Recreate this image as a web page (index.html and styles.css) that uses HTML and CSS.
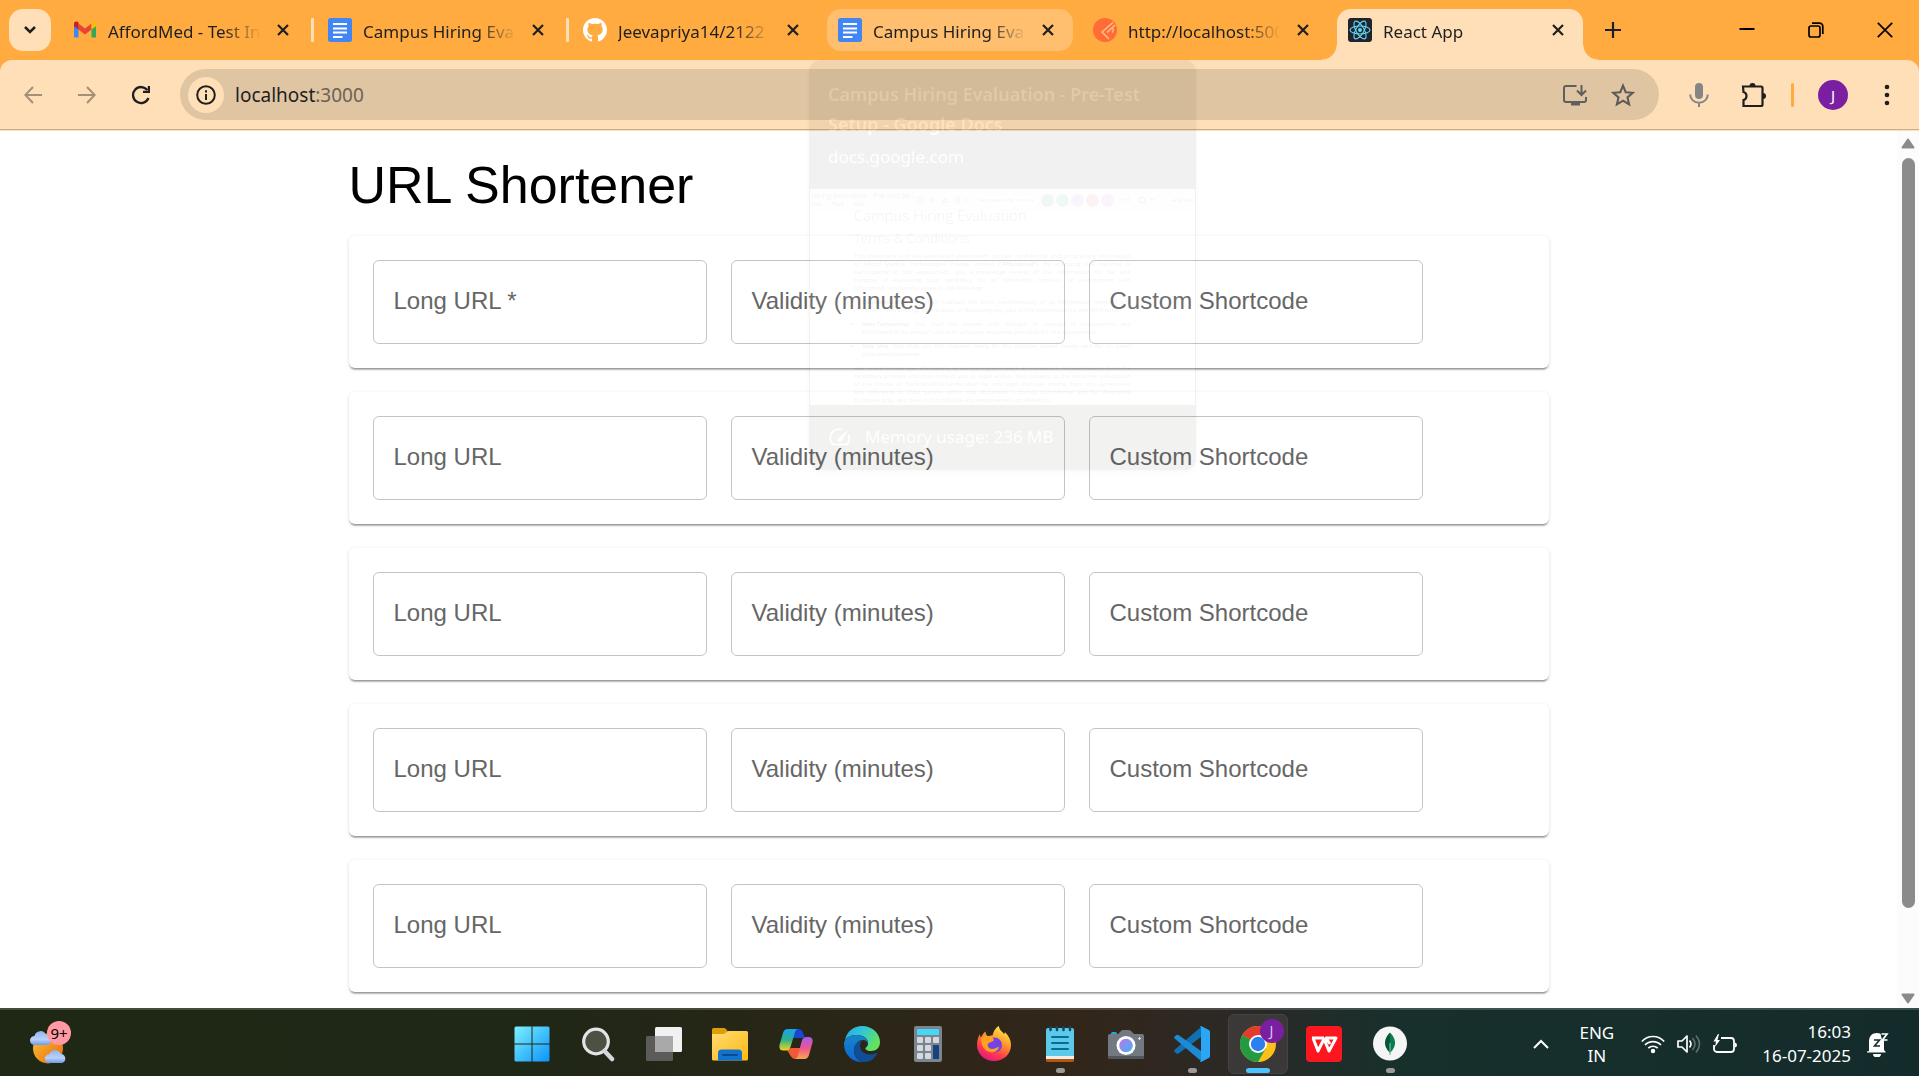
FILE: index.html
```html
<!DOCTYPE html>
<html lang="en">
<head>
<meta charset="utf-8">
<title>React App</title>
<link rel="stylesheet" href="styles.css">
</head>
<body>
<svg class="defs" width="0" height="0" aria-hidden="true">
  <defs>
    <symbol id="close" viewBox="0 0 12 12"><path d="M1 1l10 10M11 1L1 11" fill="none" stroke="#1f1f1f" stroke-width="2.2"/></symbol>
    <symbol id="docs" viewBox="0 0 24 24"><rect width="24" height="24" rx="2.5" fill="#4285f4"/><path d="M5 6h14M5 10.5h14M5 14.5h14M5 19h9.500" fill="none" stroke="#fff" stroke-width="2.2"/></symbol>
  </defs>
</svg>

<header class="browser">
  <div class="tab-strip">
    <button class="tab-search" aria-label="Search tabs"><svg width="14" height="10" viewBox="0 0 14 10"><path d="M2 2l5 5 5-5" fill="none" stroke="#1f1f1f" stroke-width="2.5"/></svg></button>
    <div class="tabs">
      <div class="tab divided">
        <svg class="favicon" viewBox="0 0 24 24"><path d="M1 6v13.500h4.500V10z" fill="#4285f4"/><path d="M23 6v13.500h-4.500V10z" fill="#34a853"/><path d="M5.500 5.500L12 10.500l6.500-5v6L12 16.500l-6.500-5z" fill="#ea4335"/><path d="M1 5.800C1 3.500 3.800 2.800 5.500 4.300v7.200L1 8.200z" fill="#c5221f"/><path d="M23 5.800c0-2.300-2.800-3-4.500-1.500v7.200L23 8.200z" fill="#fbbc04"/></svg>
        <span class="tab-title">AffordMed - Test In</span>
        <button class="tab-close" aria-label="Close tab"><svg width="12" height="12"><use href="#close"/></svg></button>
      </div>
      <div class="tab divided">
        <svg class="favicon"><use href="#docs"/></svg>
        <span class="tab-title">Campus Hiring Eva</span>
        <button class="tab-close" aria-label="Close tab"><svg width="12" height="12"><use href="#close"/></svg></button>
      </div>
      <div class="tab">
        <svg class="favicon" viewBox="0 0 16 16"><path fill="#fff" d="M8 0C3.580 0 0 3.580 0 8c0 3.540 2.290 6.530 5.470 7.590.4.070.550-.170.550-.380 0-.190-.010-.820-.010-1.490-2.010.370-2.530-.490-2.690-.940-.090-.230-.480-.940-.820-1.130-.280-.150-.680-.520-.010-.530.630-.010 1.080.580 1.230.820.720 1.210 1.870.870 2.330.660.070-.520.280-.870.510-1.070-1.780-.2-3.640-.890-3.640-3.950 0-.870.310-1.590.820-2.150-.080-.2-.360-1.020.080-2.120 0 0 .670-.210 2.200.820.640-.180 1.320-.270 2-.270s1.360.090 2 .270c1.530-1.040 2.200-.820 2.200-.820.440 1.100.160 1.920.080 2.120.510.560.820 1.270.820 2.150 0 3.070-1.870 3.750-3.650 3.950.290.250.540.730.540 1.480 0 1.070-.010 1.930-.010 2.200 0 .210.150.460.550.380A8.010 8.010 0 0 0 16 8c0-4.420-3.580-8-8-8z"/></svg>
        <span class="tab-title">Jeevapriya14/2122</span>
        <button class="tab-close" aria-label="Close tab"><svg width="12" height="12"><use href="#close"/></svg></button>
      </div>
      <div class="tab hovered">
        <svg class="favicon"><use href="#docs"/></svg>
        <span class="tab-title">Campus Hiring Eva</span>
        <button class="tab-close" aria-label="Close tab"><svg width="12" height="12"><use href="#close"/></svg></button>
      </div>
      <div class="tab">
        <svg class="favicon" viewBox="0 0 24 24"><circle cx="12" cy="12" r="12" fill="#ff6c37"/><path d="M20 4.500L9 14l7 7M14 14.500l8-7.500" fill="none" stroke="#ffc48a" stroke-width="1.500"/><path d="M19 9.500q2.500 2.500 0 5" fill="none" stroke="#ffc48a" stroke-width="1.300"/></svg>
        <span class="tab-title">http://localhost:500</span>
        <button class="tab-close" aria-label="Close tab"><svg width="12" height="12"><use href="#close"/></svg></button>
      </div>
      <div class="tab active">
        <svg class="favicon" viewBox="0 0 24 24"><rect width="24" height="24" rx="3" fill="#20232a"/><g fill="none" stroke="#61dafb" stroke-width="1.100"><ellipse cx="12" cy="12" rx="10" ry="4"/><ellipse cx="12" cy="12" rx="10" ry="4" transform="rotate(60 12 12)"/><ellipse cx="12" cy="12" rx="10" ry="4" transform="rotate(120 12 12)"/></g><circle cx="12" cy="12" r="2" fill="#61dafb"/></svg>
        <span class="tab-title">React App</span>
        <button class="tab-close" aria-label="Close tab"><svg width="12" height="12"><use href="#close"/></svg></button>
      </div>
    </div>
    <button class="new-tab" aria-label="New tab"><svg width="16" height="16" viewBox="0 0 16 16"><path d="M8 0v16M0 8h16" stroke="#1f1f1f" stroke-width="2.200"/></svg></button>
    <div class="window-controls">
      <button aria-label="Minimize"><svg width="16" height="16" viewBox="0 0 16 16"><path d="M.5 7h15" stroke="#000" stroke-width="2"/></svg></button>
      <button aria-label="Restore"><svg width="16" height="16" viewBox="0 0 16 16"><rect x="1" y="4" width="11" height="11" rx="2" fill="none" stroke="#000" stroke-width="1.700"/><path d="M4 1.200h7.500a3.300 3.300 0 0 1 3.300 3.300V12" fill="none" stroke="#000" stroke-width="1.700"/></svg></button>
      <button aria-label="Close"><svg width="16" height="16" viewBox="0 0 16 16"><path d="M.8.8l14.400 14.400M15.200.8L.8 15.200" stroke="#000" stroke-width="1.700"/></svg></button>
    </div>
  </div>

  <div class="toolbar">
    <button class="nav" aria-label="Back"><svg width="18" height="18" viewBox="0 0 18 18"><path d="M18 9H1.500M9 1L1.300 9 9 17" fill="none" stroke="#a48f77" stroke-width="2"/></svg></button>
    <button class="nav" aria-label="Forward"><svg width="18" height="18" viewBox="0 0 18 18"><path d="M0 9h16.500M9 1l7.700 8L9 17" fill="none" stroke="#a48f77" stroke-width="2"/></svg></button>
    <button class="nav" aria-label="Reload"><svg width="20" height="20" viewBox="0 0 20 20"><path d="M17.500 13A8 8 0 1 1 16.300 5" fill="none" stroke="#1f1f1f" stroke-width="2.300"/><path d="M19 1v7h-7V5.800h4.800V1z" fill="#1f1f1f"/></svg></button>
    <div class="omnibox">
      <button class="site-info" aria-label="View site information"><svg width="20" height="20" viewBox="0 0 20 20"><circle cx="10" cy="10" r="8.800" fill="none" stroke="#1f1f1f" stroke-width="2"/><path d="M10 9v6M10 5.200v2.200" stroke="#1f1f1f" stroke-width="2"/></svg></button>
      <div class="address" role="textbox" aria-label="Address">localhost<span>:3000</span></div>
      <button aria-label="Install app"><svg width="24" height="22" viewBox="0 0 24 22"><path d="M13.500 2H3a2 2 0 0 0-2 2v12a2 2 0 0 0 2 2h18a2 2 0 0 0 2-2v-3" fill="none" stroke="#5f5f5f" stroke-width="2"/><path d="M8 18h9v3.500H8z" fill="#5f5f5f"/><path d="M18.500 1v9M14 6.500l4.500 4.500L23 6.500" fill="none" stroke="#5f5f5f" stroke-width="2"/></svg></button>
      <button aria-label="Bookmark this tab"><svg width="24" height="24" viewBox="0 0 22 22"><path d="M11 2.400l2.500 6 6.500.6-4.900 4.200 1.500 6.400L11 16.200l-5.600 3.400 1.500-6.400L2 9l6.500-.6z" fill="none" stroke="#5a5a5a" stroke-width="1.900"/></svg></button>
    </div>
    <div class="actions">
      <button aria-label="Voice typing"><svg width="20" height="24" viewBox="0 0 20 24"><rect x="6" width="8" height="16" rx="4" fill="#858585"/><path d="M1.200 11.500a8.800 8.300 0 0 0 17.600 0M10 20v4" fill="none" stroke="#858585" stroke-width="2"/></svg></button>
      <button aria-label="Extensions"><svg width="26" height="26" viewBox="0 0 26 26"><path d="M2 4.500h18a1.500 1.500 0 0 1 1.500 1.500v16.500a1.500 1.500 0 0 1-1.500 1.500H2.500v-6c4-1 4-7 0-8z" fill="none" stroke="#1f1f1f" stroke-width="2.200"/><path d="M8.500 4a3 3 0 0 1 6 0zM22 11a3 3 0 0 1 0 6z" fill="#1f1f1f"/></svg></button>
      <span class="bar"></span>
      <button class="avatar" aria-label="Profile">J</button>
      <button aria-label="Menu"><svg width="6" height="22" viewBox="0 0 6 22"><g fill="#1f1f1f"><circle cx="3" cy="3" r="2.300"/><circle cx="3" cy="11" r="2.300"/><circle cx="3" cy="19" r="2.300"/></g></svg></button>
    </div>
  </div>
</header>

<div class="viewport">
  <main class="page">
    <form class="container">
      <h1>URL Shortener</h1>
      <section class="card">
        <label class="field"><span>Long URL *</span><input type="text" required></label>
        <label class="field"><span>Validity (minutes)</span><input type="text"></label>
        <label class="field"><span>Custom Shortcode</span><input type="text"></label>
      </section>
      <section class="card">
        <label class="field"><span>Long URL</span><input type="text"></label>
        <label class="field"><span>Validity (minutes)</span><input type="text"></label>
        <label class="field"><span>Custom Shortcode</span><input type="text"></label>
      </section>
      <section class="card">
        <label class="field"><span>Long URL</span><input type="text"></label>
        <label class="field"><span>Validity (minutes)</span><input type="text"></label>
        <label class="field"><span>Custom Shortcode</span><input type="text"></label>
      </section>
      <section class="card">
        <label class="field"><span>Long URL</span><input type="text"></label>
        <label class="field"><span>Validity (minutes)</span><input type="text"></label>
        <label class="field"><span>Custom Shortcode</span><input type="text"></label>
      </section>
      <section class="card">
        <label class="field"><span>Long URL</span><input type="text"></label>
        <label class="field"><span>Validity (minutes)</span><input type="text"></label>
        <label class="field"><span>Custom Shortcode</span><input type="text"></label>
      </section>
    </form>
  </main>
  <div class="scrollbar">
    <svg width="14" height="11" viewBox="0 0 14 11"><path d="M7 1.500L12.500 9.500h-11z" fill="#8b8b8b" stroke="#8b8b8b" stroke-width="2" stroke-linejoin="round"/></svg>
    <div class="track"><div class="thumb"></div></div>
    <svg width="14" height="11" viewBox="0 0 14 11"><path d="M7 9.500L1.500 1.500h11z" fill="#8b8b8b" stroke="#8b8b8b" stroke-width="2" stroke-linejoin="round"/></svg>
  </div>
</div>

<!-- Tab hover card, fading out -->
<aside class="hover-card">
  <div class="hover-head">
    <strong>Campus Hiring Evaluation - Pre-Test Setup - Google Docs</strong>
    <span>docs.google.com</span>
  </div>
  <div class="preview">
    <div class="doc-bar">
      <div class="doc-name">Hiring Evaluation - Pre-Test Se...<small>View&emsp;&emsp;Tools&emsp;&emsp;Help</small></div>
      <svg width="54" height="8" viewBox="0 0 54 8" fill="none" stroke="#555"><circle cx="4" cy="4" r="2.500"/><path d="M14 4l2.500-2.500L19 4l-2.500 2.500zM26 6l3-4 3 4z"/><circle cx="41" cy="4" r="2.500"/><path d="M50 2v4"/></svg>
      <span class="request">Request edit access</span>
      <i class="dot teal"></i><i class="dot green"></i><i class="dot purple"></i><i class="dot red"></i><i class="dot violet"></i>
      <span class="more">+31</span>
      <svg width="16" height="8" viewBox="0 0 16 8"><rect x="1" y="1.500" width="6" height="5" rx="1" fill="none" stroke="#444"/><path d="M12 3h4l-2 2z" fill="#444"/></svg>
      <span class="share">● Share</span>
    </div>
    <div class="doc">
      <h2>Campus Hiring Evaluation</h2>
      <h3>Terms &amp; Conditions</h3>
      <p><span>This document and the associated assessment contain confidential and proprietary information</span><span>of Afford Medical Technologies Private Limited ("<b>Affordmed</b>"). By accessing this material or</span><span>participating in this assessment, you acknowledge receipt of this information for the sole</span><span>purpose of evaluating your candidacy for an internship, contract, or employment with</span><span class="end">Affordmed. You hereby agree to the following:</span></p>
      <ul>
        <li><span><b>Confidentiality</b>: You shall maintain the strict confidentiality of all information received and</span><span class="end">refrain from sharing, distributing, or disclosing any part of the information to any third party.</span></li>
        <li><span><b>Non-Tampering</b>: You shall not tamper with, disrupt, or attempt to compromise any</span><span class="end">Affordmed or its vendor's cloud or software resources provided for this assessment.</span></li>
        <li><span><b>Sole Use</b>: You shall use this material solely for the purpose stated herein and for no other</span><span class="end">purpose whatsoever.</span></li>
      </ul>
      <p><span>Any unauthorised use, disclosure, or tampering will result in immediate disqualification from the</span><span>candidacy process and may subject you to legal action. You consent to the exclusive jurisdiction</span><span>of the Courts of Hyderabad/Secunderabad for any legal disputes arising from this agreement.</span><span>Any reference to third parties within this document is purely coincidental and for illustrative</span><span class="end">purposes only, and does not constitute any endorsement or affiliation.</span></p>
    </div>
  </div>
  <div class="memory">
    <svg width="22" height="20" viewBox="0 0 22 20"><path d="M13 2.500A9 9 0 0 0 4 17.500h14a9 9 0 0 0 1.500-9.500" fill="none" stroke="#fff" stroke-width="2"/><path d="M8.800 11.500L19 3l-6.500 11.500c-2.500 2-5-.8-3.700-3z" fill="#fff"/></svg>
    <span>Memory usage: 236 MB</span>
  </div>
</aside>

<footer class="taskbar">
  <button class="weather" aria-label="Widgets">
    <svg width="42" height="42" viewBox="0 0 42 42"><defs><linearGradient id="sun" x1="0" y1="0" x2="1" y2="1"><stop offset=".2" stop-color="#f3b431"/><stop offset="1" stop-color="#f0640c"/></linearGradient><linearGradient id="cloud" x1="0" y1="0" x2="0" y2="1"><stop offset="0" stop-color="#8fb4f4"/><stop offset=".6" stop-color="#b9d2fb"/><stop offset="1" stop-color="#6f98e6"/></linearGradient></defs><circle cx="18" cy="25.500" r="15" fill="url(#sun)"/><path d="M4.500 22a4.500 4.500 0 0 1 0-9 6 6 0 0 1 11.500-1 5 5 0 0 1 1 10z" fill="url(#cloud)"/><path d="M19 40a4 4 0 0 1 0-8.500 6.500 6.500 0 0 1 12-.5 4.600 4.600 0 0 1 1 9z" fill="url(#cloud)"/></svg>
    <span class="count">9+</span>
  </button>
  <nav class="apps">
    <button aria-label="Start"><svg viewBox="0 0 36 36"><defs><linearGradient id="win" x1="0" y1="0" x2="1" y2="1" gradientUnits="objectBoundingBox"><stop offset="0" stop-color="#7df0ff"/><stop offset="1" stop-color="#0a93f8"/></linearGradient></defs><path d="M2 .5h15.500v17H.5V2A1.500 1.500 0 0 1 2 .5zM18.500.5H34A1.500 1.500 0 0 1 35.500 2v15.500h-17zM.5 18.500h17v17H2A1.500 1.500 0 0 1 .5 34zM18.500 18.500h17V34a1.500 1.500 0 0 1-1.500 1.500H18.500z" fill="url(#win)"/></svg></button>
    <button aria-label="Search"><svg viewBox="0 0 36 36"><circle cx="16" cy="15.500" r="12.300" fill="#4d5143" stroke="#e2e4e6" stroke-width="3.200"/><path d="M24.500 25l7.500 8" stroke="#d4d7db" stroke-width="4.500" stroke-linecap="round"/></svg></button>
    <button aria-label="Task view"><svg viewBox="0 0 36 36"><rect y="10" width="27" height="25" rx="1.500" fill="#5c5b5a"/><rect x="9" y="1" width="27" height="25" rx="1.500" fill="#f1f1f1"/><path d="M9 10h18v16H10.500A1.500 1.500 0 0 1 9 24.500z" fill="#a9a9a9"/></svg></button>
    <button aria-label="File Explorer"><svg viewBox="0 0 36 36"><defs><linearGradient id="fold" x1="0" y1="0" x2="1" y2="1"><stop offset="0" stop-color="#ffdc74"/><stop offset="1" stop-color="#fdb813"/></linearGradient></defs><path d="M0 3.500A1.500 1.500 0 0 1 1.500 2H12q1.500 0 2.500 1.500L16 6v6H0z" fill="#dd9e0c"/><path d="M0 8h12l4-3h18.500A1.500 1.500 0 0 1 36 6.500V33a1.500 1.500 0 0 1-1.500 1.500h-33A1.500 1.500 0 0 1 0 33z" fill="url(#fold)"/><path d="M6 34.500V27a3.500 3.500 0 0 1 3.500-3.500h17A3.500 3.500 0 0 1 30 27v7.500z" fill="#1173cd"/><path d="M11 29h14" stroke="#0b4a8c" stroke-width="1.800" stroke-linecap="round"/></svg></button>
    <button aria-label="Copilot"><svg viewBox="0 0 36 36"><defs><linearGradient id="cp1" x1="0" y1="0" x2="0" y2="1"><stop offset="0" stop-color="#1c9ff4"/><stop offset=".5" stop-color="#2bb389"/><stop offset="1" stop-color="#f4d21b"/></linearGradient><linearGradient id="cp2" x1="0" y1="0" x2="0" y2="1"><stop offset="0" stop-color="#a45cf0"/><stop offset=".5" stop-color="#ee5590"/><stop offset="1" stop-color="#fca44c"/></linearGradient></defs><path d="M9 24l4 6.500q1.500 2.500 5 2.500l6-11H13z" fill="#f25a35"/><path d="M27 12l-2.500-6.500Q23.500 3 20 3h-4l-3 9z" fill="#1b46d2"/><path d="M9.500 3H20q-2 0-3 3l-4.500 15q-1 3.500-4.500 3.500H5.500Q.5 24.500 1.500 19L5 7Q6.200 3 9.500 3z" fill="url(#cp1)"/><path d="M26.500 33H16q2.500 0 3.500-3L24 14.500q1-3.500 4.500-3.500h2Q35.500 11 34.500 16.500L31 29q-1.200 4-4.500 4z" fill="url(#cp2)"/></svg></button>
    <button aria-label="Edge"><svg viewBox="0 0 36 36"><defs><linearGradient id="e1" x1="0" y1="0" x2="1" y2=".5"><stop offset="0" stop-color="#2aa6ea"/><stop offset=".5" stop-color="#33c6d4"/><stop offset="1" stop-color="#63e35c"/></linearGradient><linearGradient id="e2" x1="0" y1="0" x2="0" y2="1"><stop offset="0" stop-color="#1686c8"/><stop offset="1" stop-color="#0c66d6"/></linearGradient></defs><path d="M1 14C3 5 10 0 18 0c11 0 18 8 18 16 0 6-4 9-9 9-4 0-6-1.500-5.500-3 2-1.500 2.500-3 2.500-5 0-4-4-8-11-8-6 0-10 2-12 5z" fill="url(#e1)"/><path d="M0 18c0-5 5-9 12-9 8 0 12 4 12 8.500-1-2.500-3-3.500-5-3.500-5 0-9 5-9 10 0 7 4 11 9 12C8 37 0 28 0 18z" fill="url(#e2)"/><path d="M19 14c-5 0-9 5-9 10 0 7 5 12 11 12 5 0 9-3 12-8 .4-.8-.3-1.500-1-1-2 1-4 1.500-6 1.500-6 0-10-4-10-9 0-3 1-4.500 3-5.500z" fill="#104d97"/></svg></button>
    <button aria-label="Calculator"><svg viewBox="0 0 36 36"><rect x="4" width="28" height="36" rx="2" fill="#7b858e"/><rect x="7" y="3" width="22" height="6" rx="1" fill="#46d7f6"/><g fill="#d5d9df"><rect x="7" y="11" width="6" height="6" rx="1"/><rect x="15" y="11" width="6" height="6" rx="1"/><rect x="23" y="11" width="6" height="6" rx="1"/><rect x="7" y="19" width="6" height="6" rx="1"/><rect x="15" y="19" width="6" height="6" rx="1"/><rect x="7" y="27" width="6" height="6" rx="1"/><rect x="15" y="27" width="6" height="6" rx="1"/></g><rect x="23" y="19" width="6" height="14" rx="1" fill="#15437f"/></svg></button>
    <button aria-label="Firefox"><svg viewBox="0 0 36 36"><defs><linearGradient id="ff" x1=".8" y1="0" x2=".3" y2="1"><stop offset="0" stop-color="#fff44f"/><stop offset=".4" stop-color="#ff9a2a"/><stop offset=".75" stop-color="#ff3750"/><stop offset="1" stop-color="#e31587"/></linearGradient></defs><path d="M18 35C8 35 1 27.500 1 19c0-4 1-8 3-11 0 1.500.3 2.500 1 3.500C6 9 7.500 7 9.500 5.500c0 2 1 3.500 2 4.500 2 0 3-.5 5-.5C17.500 6 19 2 23 0c0 4 3 5 5 8 .6-.4.800-1 .8-2C33 10 35 14 35 19c0 9-7 16-17 16z" fill="url(#ff)"/><circle cx="18.500" cy="19" r="7.500" fill="#7542e5"/><path d="M5 12c4-3 8-2 11-1l2 3c-1 2-5 2-6 4s1 5 4 5 5-2 7-2c-1 4-5 6-9 5C8 25 5 19 5 12z" fill="#ffa01f"/></svg></button>
    <button class="running" aria-label="Notepad"><svg viewBox="0 0 36 36"><rect x="4" y="28" width="28" height="8" rx="1.500" fill="#b4560c"/><rect x="4" y="26" width="28" height="7" fill="#f1eeee"/><path d="M4 4a2 2 0 0 1 2-2h24a2 2 0 0 1 2 2v26H4z" fill="#5bc9e8"/><path d="M10 11h16M10 17h16M10 23h16" stroke="#0b6a95" stroke-width="2" stroke-linecap="round"/><path d="M8.500 1v3M15 1v3M21.500 1v3M28 1v3" stroke="#12485e" stroke-width="2.500" stroke-linecap="round"/></svg></button>
    <button aria-label="Camera"><svg viewBox="0 0 36 36"><defs><linearGradient id="lens" x1="0" y1="0" x2="1" y2="1"><stop offset=".1" stop-color="#b17be8"/><stop offset="1" stop-color="#40b4f4"/></linearGradient></defs><rect x="3" y="6" width="6" height="5" rx="1.500" fill="#21a7e8"/><path d="M0 10a2 2 0 0 1 2-2h8l3-3q1-1 2.500-1h5Q22 4 23 5l3 3h8a2 2 0 0 1 2 2v21a2 2 0 0 1-2 2H2a2 2 0 0 1-2-2z" fill="#727980"/><path d="M0 30h36v1a2 2 0 0 1-2 2H2a2 2 0 0 1-2-2z" fill="#51575d"/><circle cx="18" cy="19.500" r="9.500" fill="#fff"/><circle cx="18" cy="19.500" r="6.800" fill="url(#lens)"/><path d="M31.500 11v3M30 12.500h3" stroke="#ddd"/></svg></button>
    <button class="running" aria-label="Visual Studio Code"><svg viewBox="0 0 36 36"><path d="M27 1v10L4.500 27.500q-1 .6-2 0L.6 25.800q-1-1 0-2z" fill="#0f70b4"/><path d="M27 35V25L4.500 9q-1-.6-2 0L.6 10.500q-1 1 0 2z" fill="#1d8bd1"/><path d="M26 .3q.8-.4 1.600 0L34.800 4Q36 4.600 36 6v24q0 1.400-1.200 2l-7.200 3.700q-.8.400-1.600 0 1-.6 1-2V2.300q0-1.400-1-2z" fill="#2ba6f5"/></svg></button>
    <button class="current" aria-label="Chrome"><svg viewBox="0 0 36 36"><circle cx="18" cy="18" r="18" fill="#fbc116"/><path d="M18 18L2.400 9A18 18 0 0 1 33.600 9H18z" fill="#e33b2e"/><path d="M18 18l7.800 4.500L18 36A18 18 0 0 1 2.400 9z" fill="#249a41"/><circle cx="18" cy="18" r="9" fill="#fff"/><circle cx="18" cy="18" r="7.200" fill="#2d7ff0"/></svg><span class="badge">J</span></button>
    <button aria-label="WPS Office"><svg viewBox="0 0 36 36"><rect width="36" height="36" rx="4" fill="#fc1620"/><path d="M6 12h12M7 12l5 13 6-12 5 12 7-13H20l4 6" fill="none" stroke="#fff" stroke-width="3" stroke-linejoin="round"/></svg></button>
    <button class="running" aria-label="MongoDB Compass"><svg viewBox="0 0 36 36"><circle cx="18" cy="17.500" r="17" fill="#f4f5f4"/><path d="M18 6.500c6 6 7.500 13 0 20.500z" fill="#0b7d4c"/><path d="M18 6.500c-6 6-7.500 13 0 20.500z" fill="#02563a"/><path d="M18 17v12" stroke="#7fb59c" stroke-width="1.200"/></svg></button>
  </nav>
  <div class="tray">
    <button class="chevron" aria-label="Show hidden icons"><svg width="16" height="10" viewBox="0 0 16 10"><path d="M1 9l7-7 7 7" fill="none" stroke="#fff" stroke-width="2"/></svg></button>
    <button class="lang">ENG<br>IN</button>
    <button class="status" aria-label="Network, volume and battery">
      <svg width="24" height="20" viewBox="0 0 24 20"><g fill="none" stroke="#fff" stroke-width="1.700"><path d="M.8 7.500a15 15 0 0 1 22.400 0M4 11a11 11 0 0 1 16 0M7.300 14.200a6.600 6.600 0 0 1 9.400 0"/></g><circle cx="12" cy="17" r="2.200" fill="#fff"/></svg>
      <svg width="24" height="20" viewBox="0 0 24 20"><path d="M1 7h4l5-5v16l-5-5H1z" fill="none" stroke="#fff" stroke-width="1.700" stroke-linejoin="round"/><path d="M12.500 6.500q3 3.500 0 7" fill="none" stroke="#fff" stroke-width="1.600"/><path d="M15.500 4q5 6 0 12M19 1.500q7 8.500 0 17" fill="none" stroke="#5f7070" stroke-width="1.600"/></svg>
      <svg width="24" height="20" viewBox="0 0 24 20"><path d="M8 4h10a3 3 0 0 1 3 3v8a3 3 0 0 1-3 3H4a3 3 0 0 1-3-3v-4" fill="none" stroke="#fff" stroke-width="1.800"/><path d="M22 8.500q2 .5 2 2.500t-2 2.500zM5 0L.5 7.500H3L2 13l5-7H4.500L6 0z" fill="#fff"/></svg>
    </button>
    <time class="clock">16:03<br>16-07-2025</time>
    <button class="bell" aria-label="Notifications"><svg width="22" height="26" viewBox="0 0 22 26"><path d="M2 20V11C2 5 5 2 10 2q2 0 3.500.8L15 9h2v10l1.500 1.500v1H0v-1zM6 23h8a4 3.500 0 0 1-8 0z" fill="#fff"/><path d="M14.500 3h5.500l-4.500 6h5" fill="none" stroke="#fff" stroke-width="1.700"/><path d="M7 9h5.500L7.500 15H13" fill="none" stroke="#142b2b" stroke-width="1.600"/></svg></button>
  </div>
</footer>
</body>
</html>
```
FILE: styles.css
```css
* { box-sizing: border-box; }

body {
  margin: 0;
  height: 100vh;
  display: flex;
  flex-direction: column;
  overflow: hidden;
  background: #fff;
  font-family: "Noto Sans", "Open Sans", sans-serif;
  color: #1f1f1f;
}

button {
  display: flex;
  align-items: center;
  justify-content: center;
  padding: 0;
  border: 0;
  background: none;
  font: inherit;
  color: inherit;
}

svg { display: block; flex: none; }
.defs { position: absolute; }

/* Browser frame */
.browser { background: #ffab40; flex: none; }

.tab-strip {
  display: flex;
  height: 60px;
  padding: 9px 0 0 9px;
}

.tab-search {
  width: 42px;
  height: 42px;
  border-radius: 14px;
  background: #ffdfb8;
}

.tabs {
  display: flex;
  gap: 9px;
  margin-left: 11px;
}

.tab {
  position: relative;
  display: flex;
  align-items: center;
  flex: 0 1 246px;
  width: 246px;
  height: 42px;
  padding: 0 15px 0 11px;
  border-radius: 14px;
}

.tab.divided::after {
  content: "";
  position: absolute;
  top: 9px;
  right: -6px;
  width: 3px;
  height: 24px;
  border-radius: 1px;
  background: #ffdfb8;
}

.tab.hovered { background: #ffbf6f; }

.tab.active {
  height: 51px;
  padding-bottom: 9px;
  border-radius: 14px 14px 0 0;
  background: #ffdfb8;
}

.tab.active::before,
.tab.active::after {
  content: "";
  position: absolute;
  bottom: 0;
  width: 15px;
  height: 15px;
}
.tab.active::before { left: -15px; background: radial-gradient(circle at 0 0, #ffab40 14px, #ffdfb8 15px); }
.tab.active::after { right: -15px; background: radial-gradient(circle at 100% 0, #ffab40 14px, #ffdfb8 15px); }

.favicon { width: 24px; height: 24px; }

.tab-title {
  flex: 1;
  margin: 0 4px 0 11px;
  padding-top: 3px;
  overflow: hidden;
  white-space: nowrap;
  font-size: 17px;
  line-height: 24px;
  -webkit-mask-image: linear-gradient(to right, #000 calc(100% - 46px), transparent calc(100% - 8px));
  mask-image: linear-gradient(to right, #000 calc(100% - 46px), transparent calc(100% - 8px));
}

.tab-close { width: 20px; height: 24px; }

.new-tab { width: 42px; height: 42px; margin-left: 9px; }

.window-controls { display: flex; margin: 0 0 0 auto; height: 42px; }
.window-controls button { width: 69px; }

.toolbar {
  display: flex;
  align-items: center;
  height: 71px;
  padding: 0 29px 2px 15px;
  border-radius: 12px 12px 0 0;
  background: #ffdfb8;
  box-shadow: inset 0 -1px #ffdfb8, inset 0 -2px #cbac8e;
}

.nav { width: 36px; height: 36px; margin-right: 18px; }

.omnibox {
  display: flex;
  align-items: center;
  flex: 1;
  height: 51px;
  margin-left: 3px;
  padding: 0 24px 0 8px;
  border-radius: 26px;
  background: #dfc5a2;
}

.site-info { width: 36px; height: 36px; border-radius: 50%; background: #ffdfb8; }
.address { flex: 1; margin-left: 11px; font-size: 19px; line-height: 30px; }
.address span { color: #6b6257; }
.omnibox > button + .address ~ button { margin-left: 24px; }

.actions { display: flex; align-items: center; margin-left: 30px; }
.actions .bar { width: 3px; height: 24px; margin: 0 24px; border-radius: 2px; background: #ffab40; }
.actions button + button { margin-left: 32px; }
.actions .avatar { width: 30px; height: 30px; border-radius: 50%; background: #7b1fa2; color: #fff; font-size: 15px; margin-right: 4px; }

/* Page area */
.viewport { display: flex; flex: 1; min-height: 0; }
.page { flex: 1; min-width: 0; overflow: hidden; font-family: "Liberation Sans", Arial, sans-serif; }
.container { max-width: 1200px; margin: 0 auto; padding-top: 23px; }

h1 { margin: 0 0 19px; font-size: 52px; font-weight: 400; line-height: 63px; color: #000; }

.card {
  display: flex;
  gap: 24px;
  margin-bottom: 24px;
  padding: 24px;
  border-radius: 6px;
  background: #fff;
  box-shadow: 0 3px 2px -2px rgba(0, 0, 0, .3), 0 2px 1px rgba(0, 0, 0, .14), 0 1px 4px rgba(0, 0, 0, .12);
}

.field { display: grid; flex: 0 1 334px; align-items: center; }
.field span,
.field input { grid-area: 1 / 1; }
.field span { padding: 0 0 2px 21px; font-size: 24px; line-height: 34px; color: #666; }
.field input {
  width: 100%;
  height: 84px;
  padding: 0 20px;
  border: 1px solid #c4c4c4;
  border-radius: 6px;
  background: none;
  font: inherit;
  font-size: 24px;
}

.scrollbar {
  display: flex;
  flex-direction: column;
  align-items: center;
  width: 22px;
  padding: 7px 0 4px;
  background: #fcfcfc;
}
.track { flex: 1; width: 13px; padding: 9px 0 2px; }
.thumb { height: 90%; border-radius: 7px; background: #8b8b8b; }

/* Tab hover card */
.hover-card {
  position: absolute;
  top: 60px;
  left: 809px;
  width: 387px;
  border-radius: 12px;
  background: #1f1f1f;
  color: #fff;
  opacity: .06;
  box-shadow: 0 2px 6px rgba(0, 0, 0, .5);
  overflow: hidden;
}
.hover-head { display: flex; flex-direction: column; padding: 19px 19px 16px; height: 129px; font-size: 17px; line-height: 30px; }
.hover-head strong { font-size: 18px; font-weight: 600; }
.hover-head span { margin-top: 3px; }

.preview { height: 216px; margin: 0 1px; background: #fff; color: #333; overflow: hidden; }
.doc-bar { display: flex; align-items: center; height: 22px; padding: 0 1px; background: #f6f8fc; font-size: 6px; line-height: 9px; white-space: nowrap; }
.doc-name { width: 105px; font-size: 7px; }
.doc-name small { display: block; font-size: 5px; }
.request { margin: 0 4px 0 6px; padding: 0 3px; border-radius: 6px; background: #fff; color: #0b57d0; }
.dot { width: 13px; height: 13px; margin-right: 2px; border-radius: 50%; }
.teal { background: #0f8a6b; }
.green { background: #1b9b8d; }
.purple { background: #b16bdc; }
.red { background: #d0335c; }
.violet { background: #b452cf; }
.more { margin: 0 8px 0 4px; }
.share { margin-left: auto; color: #0b57d0; }

.doc { width: 277px; margin-left: 44px; font-family: "Open Sans", "Noto Sans", sans-serif; font-size: 6px; line-height: 8px; }
.doc h2 { margin: -6px 0 0; font-size: 15px; font-weight: 300; line-height: 20px; }
.doc h3 { margin: 4px 0 5px; font-size: 13px; font-weight: 300; line-height: 18px; }
.doc p { margin: 0 0 6px; }
.doc ul { margin: 0; padding-left: 8px; list-style: disc; }
.doc li { margin-bottom: 6px; }
.doc p span,
.doc li span { display: block; white-space: nowrap; text-align: justify; text-align-last: justify; }
.doc p .end,
.doc li .end { text-align-last: left; }

.memory { display: flex; align-items: center; gap: 14px; height: 65px; padding: 0 20px 2px; background: #30302a; font-size: 17px; }

/* Taskbar */
.taskbar {
  display: grid;
  grid-template-columns: 1fr auto 1fr;
  align-items: center;
  flex: none;
  height: 68px;
  padding-top: 4px;
  background: linear-gradient(to right, #1f2815 0%, #1f2716 27%, #272617 40%, #32261a 56%, #2b2927 65%, #17302c 73%, #142b2b 100%);
  box-shadow: inset 0 2px rgba(255, 255, 255, .17);
  color: #fff;
}

.weather { position: relative; width: 42px; margin-left: 30px; }
.count {
  position: absolute;
  top: -2px;
  right: 1px;
  width: 24px;
  height: 24px;
  border-radius: 50%;
  background: #ff99a4;
  color: #000;
  font-size: 15px;
  line-height: 24px;
}

.apps { display: flex; gap: 6px; padding-left: 2px; }
.apps button { position: relative; width: 60px; height: 60px; border-radius: 6px; }
.apps svg { width: 36px; height: 36px; }
.apps .current { background: #3b3938; border: 1px solid #464443; }
.apps .running::after,
.apps .current::after {
  content: "";
  position: absolute;
  bottom: 1px;
  left: 50%;
  width: 9px;
  height: 5px;
  margin-left: -4px;
  border-radius: 3px;
  background: #9b9a98;
}
.apps .current::after { bottom: 0; width: 24px; margin-left: -12px; background: #4cc2ff; }
.badge {
  position: absolute;
  top: 4px;
  right: 3px;
  width: 24px;
  height: 24px;
  border-radius: 50%;
  background: #7b1fa2;
  color: #dcc4e6;
  font-size: 14px;
  line-height: 24px;
}

.tray { display: flex; align-items: center; justify-content: flex-end; padding-right: 30px; font-size: 17px; line-height: 23px; }
.lang { margin-left: 31px; }
.status { gap: 12px; margin-left: 27px; }
.clock { margin-left: 25px; text-align: right; line-height: 24px; }
.bell { margin-left: 16px; }
```
